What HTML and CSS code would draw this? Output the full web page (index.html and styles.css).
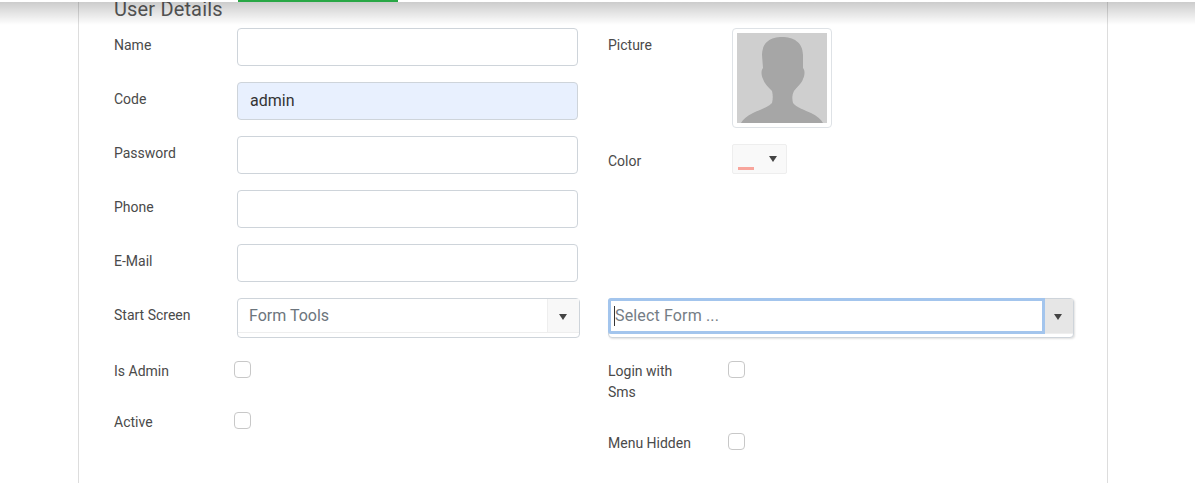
FILE: index.html
```html
<!DOCTYPE html>
<html lang="en">
<head>
<meta charset="utf-8">
<title>User Details</title>
<link rel="stylesheet" href="styles.css">
</head>
<body>
<div class="topbar"><div class="topbar-progress"></div></div>
<main class="panel">
  <h2 class="title">User Details</h2>
  <div class="columns">
    <section class="col col-left">
      <div class="row"><label class="label">Name</label><div class="field"></div></div>
      <div class="row"><label class="label">Code</label><div class="field field-filled">admin</div></div>
      <div class="row"><label class="label">Password</label><div class="field"></div></div>
      <div class="row"><label class="label">Phone</label><div class="field"></div></div>
      <div class="row"><label class="label">E-Mail</label><div class="field"></div></div>
      <div class="row row-select">
        <label class="label">Start Screen</label>
        <div class="select select-left">
          <div class="select-main"><span class="select-text">Form Tools</span><span class="select-btn"><i class="caret"></i></span></div>
        </div>
      </div>
      <div class="check-row check-first"><label class="label label-check">Is Admin</label><span class="check check-l"></span></div>
      <div class="check-row check-second"><label class="label label-check">Active</label><span class="check check-l"></span></div>
    </section>
    <section class="col col-right">
      <div class="row row-picture">
        <label class="label label-r">Picture</label>
        <div class="picture">
          <svg class="avatar" viewBox="0 0 90 90" width="90" height="90" aria-hidden="true">
            <defs><filter id="soft" x="-5%" y="-5%" width="110%" height="110%"><feGaussianBlur stdDeviation="0.6"/></filter></defs>
            <rect width="90" height="90" fill="#cfcfcf"/>
            <path filter="url(#soft)" fill="#a6a6a6" d="M45 4C56 4 66 9 66 22L66 35C68 37 68 42 66 46C65 50 60 54 57 58C55 62 55 66 56 70C60 75 68 77 74 80C80 83 84 86 86 90L4 90C6 86 10 83 16 80C22 77 30 75 35 70C36 66 36 62 35 58C31 54 27 50 26 46C24 42 24 37 26 35L25 22C25 9 34 4 45 4Z"/>
          </svg>
        </div>
      </div>
      <div class="row row-color">
        <label class="label label-r label-color">Color</label>
        <div class="color-pick"><span class="color-bar"></span><i class="caret"></i></div>
      </div>
      <div class="row row-select row-form">
        <div class="select select-right">
          <div class="select-main"><span class="select-input"><span class="text-cursor"></span><span class="select-text select-ph">Select Form ...</span></span><span class="select-btn select-btn-dark"><i class="caret"></i></span></div>
        </div>
      </div>
      <div class="check-row check-first check-tall"><label class="label label-check label-r2">Login with Sms</label><span class="check"></span></div>
      <div class="check-row check-menu"><label class="label label-check label-r2">Menu Hidden</label><span class="check"></span></div>
    </section>
  </div>
</main>
</body>
</html>
```

FILE: styles.css
```css
* { box-sizing: border-box; }
html, body { margin: 0; height: 483px; overflow: hidden; background: #fff; }
body { font-family: Roboto, "Liberation Sans", sans-serif; color: #4a4a4a; font-size: 14px; position: relative; }

.topbar {
  position: absolute; top: 0; left: 0; right: 0; height: 25px; z-index: 5;
  border-top: 2px solid #fff;
  background: linear-gradient(to bottom, rgba(0,0,0,.2), rgba(0,0,0,0));
}
.topbar-progress { position: absolute; top: -2px; left: 238px; width: 160px; height: 2px; background: #28a745; }

.panel {
  margin-left: 78px; width: 1030px; height: 483px;
  border-left: 1px solid #ddd; border-right: 1px solid #ddd;
  padding-left: 35px;
}
.title { margin: 0; height: 28px; font-size: 20px; font-weight: 400; line-height: 18px; letter-spacing: .15px; color: #5a5a5a; }
.columns { display: flex; }
.col { display: flex; flex-direction: column; }
.col-left { width: 494px; }
.col-right { width: 480px; }

.row { display: flex; height: 38px; margin-bottom: 16px; }
.label { display: block; line-height: 21px; padding-top: 7px; }
.col-left .label { width: 123px; }
.label-r { width: 124px; }

.field {
  width: 341px; height: 38px; border: 1px solid #ced4da; border-radius: 4px;
  padding: 0 12px; font-size: 16px; line-height: 36px; color: #495057; background: #fff;
}
.field-filled { background: #e8f0fe; color: #333; }

.row-select { height: 40px; margin-bottom: 0; }
.select { height: 40px; border: 1px solid #ced4da; border-radius: 4px; background: #fff; }
.select-left { width: 343px; }
.select-right { width: 466px; box-shadow: 1px 1px 2px rgba(0,0,0,.12); }
.select-main { display: flex; height: 34px; border-bottom: 1px solid #eee; }
.select-text { font-size: 16px; line-height: 33px; color: #6c757d; padding-left: 11px; flex: 1; }
.select-btn { width: 32px; display: flex; align-items: center; justify-content: center; background: #f8f8f8; border-left: 1px solid #eee; }
.select-left .caret { margin-left: -2px; margin-top: 2px; }
.select-btn-dark { background: #e6e6e6; border-left: 0; width: 28px; }
.select-btn-dark .caret { margin-left: -3px; margin-top: 2px; }
.select-input {
  flex: 1; display: flex; align-items: center; height: 36px;
  margin: -1px 0 0 -1px; border: 3px solid #a3c5ed; background: #fff; border-radius: 3px 0 0 3px;
}
.select-input .select-text { padding-left: 0; color: #757d85; line-height: 30px; letter-spacing: .15px; }
.text-cursor { width: 1px; height: 20px; background: #333; margin-left: 3px; }
.select-right .select-main { height: 35px; }

.caret {
  display: block; width: 0; height: 0;
  border-left: 4px solid transparent; border-right: 4px solid transparent; border-top: 6px solid #444;
}

.row-picture { height: 100px; }
.picture {
  width: 100px; height: 100px; border: 1px solid #dee2e6; border-radius: 4px; padding: 4px; background: #fff;
}
.avatar { display: block; }

.row-color { height: 30px; margin-bottom: 0; }
.color-pick {
  position: relative; width: 55px; height: 30px; background: #f9f9f9; border: 1px solid #eee; border-radius: 2px;
  display: flex; justify-content: flex-end; padding: 11px 9px 0 0;
}
.color-bar { position: absolute; left: 5px; bottom: 3px; width: 16px; height: 3px; background: #f8a59c; }
.row-form { margin-top: 124px; }

.check-row { display: flex; align-items: flex-start; }
.check { width: 17px; height: 17px; border: 1px solid #c8c8c8; border-radius: 4px; background: #fff; flex: none; }
.check-first { margin-top: 23px; }
.check-second { margin-top: 34px; }
.check-tall { height: 72px; }
.col-left .check-row .label-check { width: 120px; height: 17px; padding-top: 0; }
.label-check { padding-top: 0; }
.label-r2 { width: 120px; padding-right: 30px; }
```
